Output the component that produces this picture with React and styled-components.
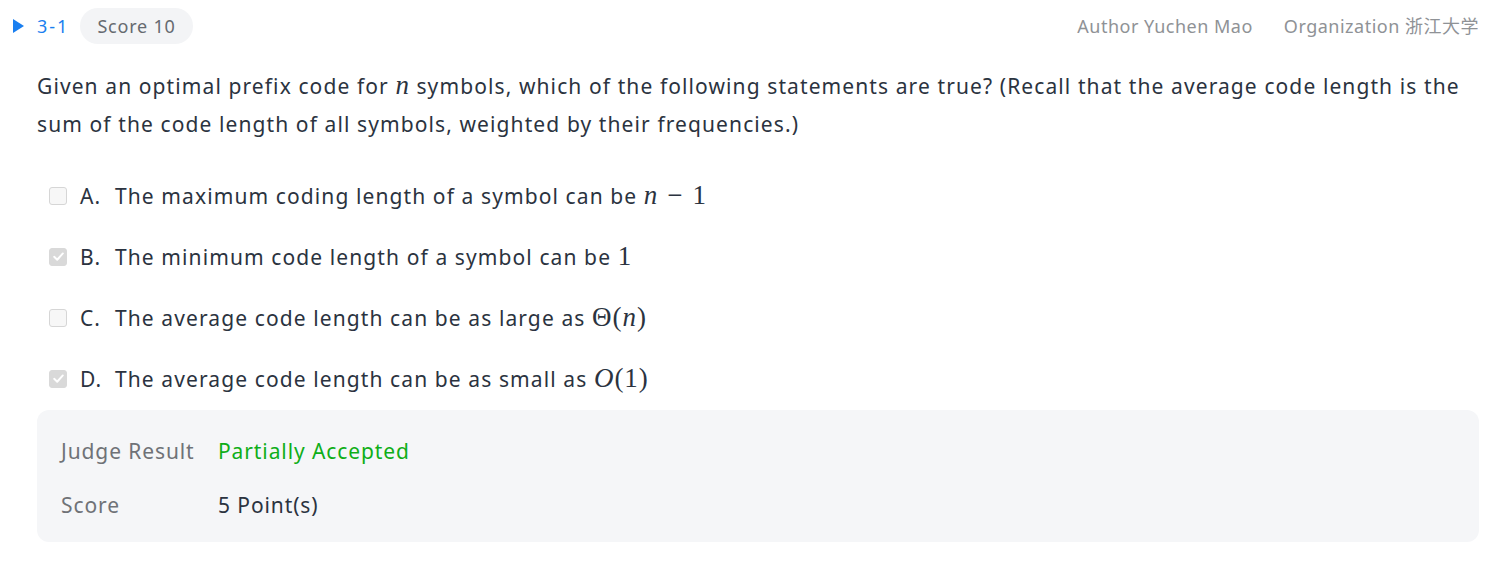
import React from "react";
import styled, { createGlobalStyle } from "styled-components";

const Global = createGlobalStyle`
  html, body { margin: 0; padding: 0; background: #fff; }
  body { font-family: "Noto Sans", "Open Sans", "Noto Sans CJK SC", sans-serif; }
`;

const Page = styled.div`
  padding: 7px 18px 0 13px;
  box-sizing: border-box;
  width: 1497px;
`;

const Header = styled.div`
  display: flex;
  align-items: center;
  height: 36px;
  padding-top: 1px;
`;

const Left = styled.div`
  display: flex;
  align-items: center;
  flex: 1;
`;

const Caret = styled.span`
  width: 0;
  height: 0;
  border-top: 7px solid transparent;
  border-bottom: 7px solid transparent;
  border-left: 11px solid #1a7ff0;
  margin-right: 13px;
`;

const Num = styled.span`
  color: #1a7ff0;
  font-size: 18px;
  letter-spacing: 2px;
  margin-right: 11px;
`;

const Pill = styled.span`
  background: #f3f4f6;
  color: #666a70;
  font-size: 18px;
  letter-spacing: 0.8px;
  height: 36px;
  line-height: 36px;
  padding: 0 17px;
  border-radius: 18px;
`;

const Meta = styled.div`
  display: flex;
  align-items: center;
  gap: 31px;
  color: #8f9296;
  font-size: 18px;
  letter-spacing: 0.5px;
  line-height: 24px;
`;

const Body = styled.div`
  padding-left: 24px;
`;

const Question = styled.p`
  margin: 23px 0 0;
  color: #2b3340;
  font-size: 21px;
  letter-spacing: 1.1px;
  line-height: 38px;
`;

const M = styled.span`
  font-family: "Liberation Serif", "DejaVu Serif", serif;
  font-style: ${(p) => (p.$i ? "italic" : "normal")};
  font-size: 27px;
  letter-spacing: 1px;
  line-height: 1;
`;

const Op = styled(M)`
  margin: 0 9px;
`;

const Options = styled.div`
  display: flex;
  flex-direction: column;
  margin-top: 22px;
`;

const Option = styled.label`
  display: flex;
  align-items: center;
  height: 61px;
  padding-left: 12px;
  color: #2b3340;
  font-size: 21px;
  letter-spacing: 1.1px;
`;

const Box = styled.span`
  width: 18px;
  height: 18px;
  border-radius: 3px;
  box-sizing: border-box;
  border: 1px solid ${(p) => (p.$checked ? "#d9d9d9" : "#d6d6d6")};
  background: ${(p) => (p.$checked ? "#d9d9d9" : "#f7f7f7")};
  display: flex;
  align-items: center;
  justify-content: center;
  margin-right: 13px;
  flex: none;
`;

const Letter = styled.span`
  width: 35px;
  flex: none;
`;

const Result = styled.div`
  margin-top: 1px;
  background: #f5f6f8;
  border-radius: 12px;
  padding: 25px 24px 21px;
  display: grid;
  grid-template-columns: 157px 1fr;
  row-gap: 22px;
  font-size: 21px;
  letter-spacing: 0.9px;
  line-height: 32px;
`;

const Key = styled.span`
  color: #6f7277;
`;

const Val = styled.span`
  color: ${(p) => p.$color || "#2b3340"};
`;

const Check = () => (
  <svg width="13" height="13" viewBox="0 0 12 12">
    <path d="M2 6.3 L4.8 9 L10 3.2" fill="none" stroke="#fff" strokeWidth="1.8" strokeLinecap="round" strokeLinejoin="round" />
  </svg>
);

const opts = [
  { l: "A.", checked: false, text: <>The maximum coding length of a symbol can be <M $i>n</M><Op>−</Op><M>1</M></> },
  { l: "B.", checked: true, text: <>The minimum code length of a symbol can be <M>1</M></> },
  { l: "C.", checked: false, text: <>The average code length can be as large as <M>Θ(</M><M $i>n</M><M>)</M></> },
  { l: "D.", checked: true, text: <>The average code length can be as small as <M $i>O</M><M>(1)</M></> },
];

export default function App() {
  return (
    <>
      <Global />
      <Page>
        <Header>
          <Left>
            <Caret />
            <Num>3-1</Num>
            <Pill>Score 10</Pill>
          </Left>
          <Meta>
            <span>Author Yuchen Mao</span>
            <span>Organization 浙江大学</span>
          </Meta>
        </Header>
        <Body>
          <Question>
            Given an optimal prefix code for <M $i>n</M> symbols, which of the following statements are true? (Recall that the average code length is the sum of the code length of all symbols, weighted by their frequencies.)
          </Question>
          <Options>
            {opts.map((o) => (
              <Option key={o.l}>
                <Box $checked={o.checked}>{o.checked && <Check />}</Box>
                <Letter>{o.l}</Letter>
                <span>{o.text}</span>
              </Option>
            ))}
          </Options>
          <Result>
            <Key>Judge Result</Key>
            <Val $color="#0fae18">Partially Accepted</Val>
            <Key>Score</Key>
            <Val>5 Point(s)</Val>
          </Result>
        </Body>
      </Page>
    </>
  );
}
